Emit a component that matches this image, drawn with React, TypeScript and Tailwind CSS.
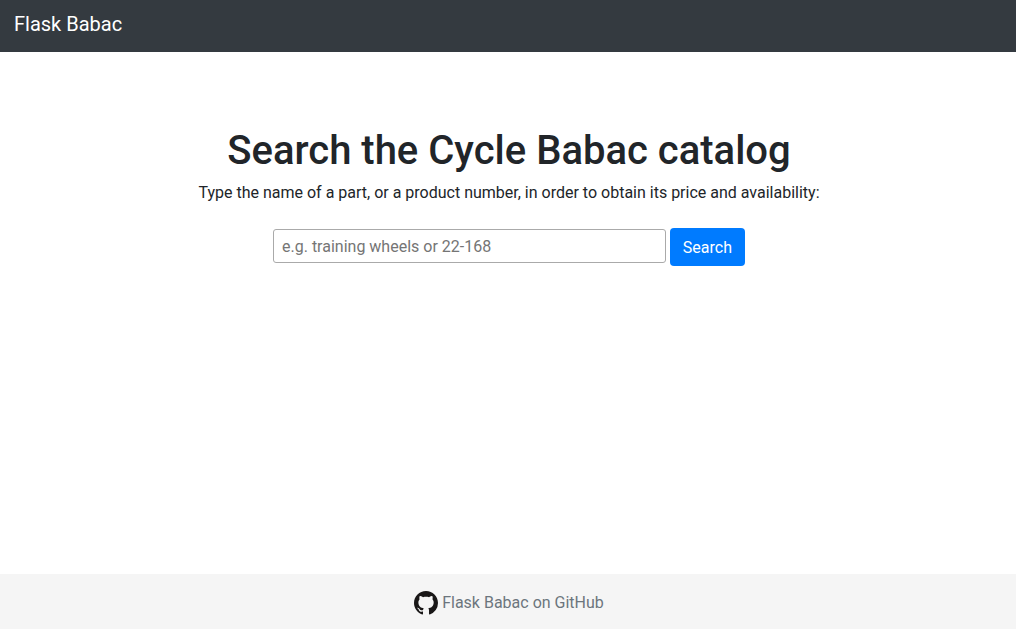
export default function App() {
  return (
    <div className="flex min-h-screen flex-col bg-white font-[Roboto,sans-serif] text-base text-[#212529]">
      <header className="bg-[#343a40] px-3.5 pt-1.5 pb-2.5">
        <nav className="flex">
          <a href="/" className="py-[3px] text-xl leading-[30px] text-white">Flask Babac</a>
        </nav>
      </header>
      <main className="flex grow flex-col items-center pt-[75px] pr-4 pl-[18px] text-center">
        <h1 className="mb-1.5 text-[40px] leading-12 font-medium">Search the Cycle Babac catalog</h1>
        <label htmlFor="query" className="mb-[23px]">
          Type the name of a part, or a product number, in order to obtain its price and availability:
        </label>
        <form className="flex w-full max-w-[472px] items-start gap-1" onSubmit={(e) => e.preventDefault()}>
          <input
            id="query"
            type="text"
            placeholder="e.g. training wheels or 22-168"
            className="mt-px h-[34px] min-w-0 grow rounded-[3px] border border-[#aaaaaa] px-2 placeholder:text-[#757575]"
          />
          <button type="submit" className="rounded-sm bg-[#007bff] px-[13px] pt-2 pb-1.5 text-white">
            Search
          </button>
        </form>
      </main>
      <footer className="flex justify-center bg-[#f5f5f5] pt-[17px] pr-4 pb-3.5 pl-[18px]">
        <a href="https://github.com" className="flex items-center gap-1 text-[#6c757d]">
          <svg viewBox="0 0 16 16" className="size-6 fill-[#191717]" aria-hidden="true">
            <path d="M8 0C3.58 0 0 3.58 0 8c0 3.54 2.29 6.53 5.47 7.59.4.07.55-.17.55-.38 0-.19-.01-.82-.01-1.49-2.01.37-2.53-.49-2.69-.94-.09-.23-.48-.94-.82-1.13-.28-.15-.68-.52-.01-.53.63-.01 1.08.58 1.23.82.72 1.21 1.87.87 2.33.66.07-.52.28-.87.51-1.07-1.78-.2-3.64-.89-3.64-3.95 0-.87.31-1.59.82-2.15-.08-.2-.36-1.02.08-2.12 0 0 .67-.21 2.2.82.64-.18 1.32-.27 2-.27s1.36.09 2 .27c1.53-1.04 2.2-.82 2.2-.82.44 1.1.16 1.92.08 2.12.51.56.82 1.27.82 2.15 0 3.07-1.87 3.75-3.65 3.95.29.25.54.73.54 1.48 0 1.07-.01 1.93-.01 2.2 0 .21.15.46.55.38A8.01 8.01 0 0 0 16 8c0-4.42-3.58-8-8-8z" />
          </svg>
          <span>Flask Babac on GitHub</span>
        </a>
      </footer>
    </div>
  );
}
